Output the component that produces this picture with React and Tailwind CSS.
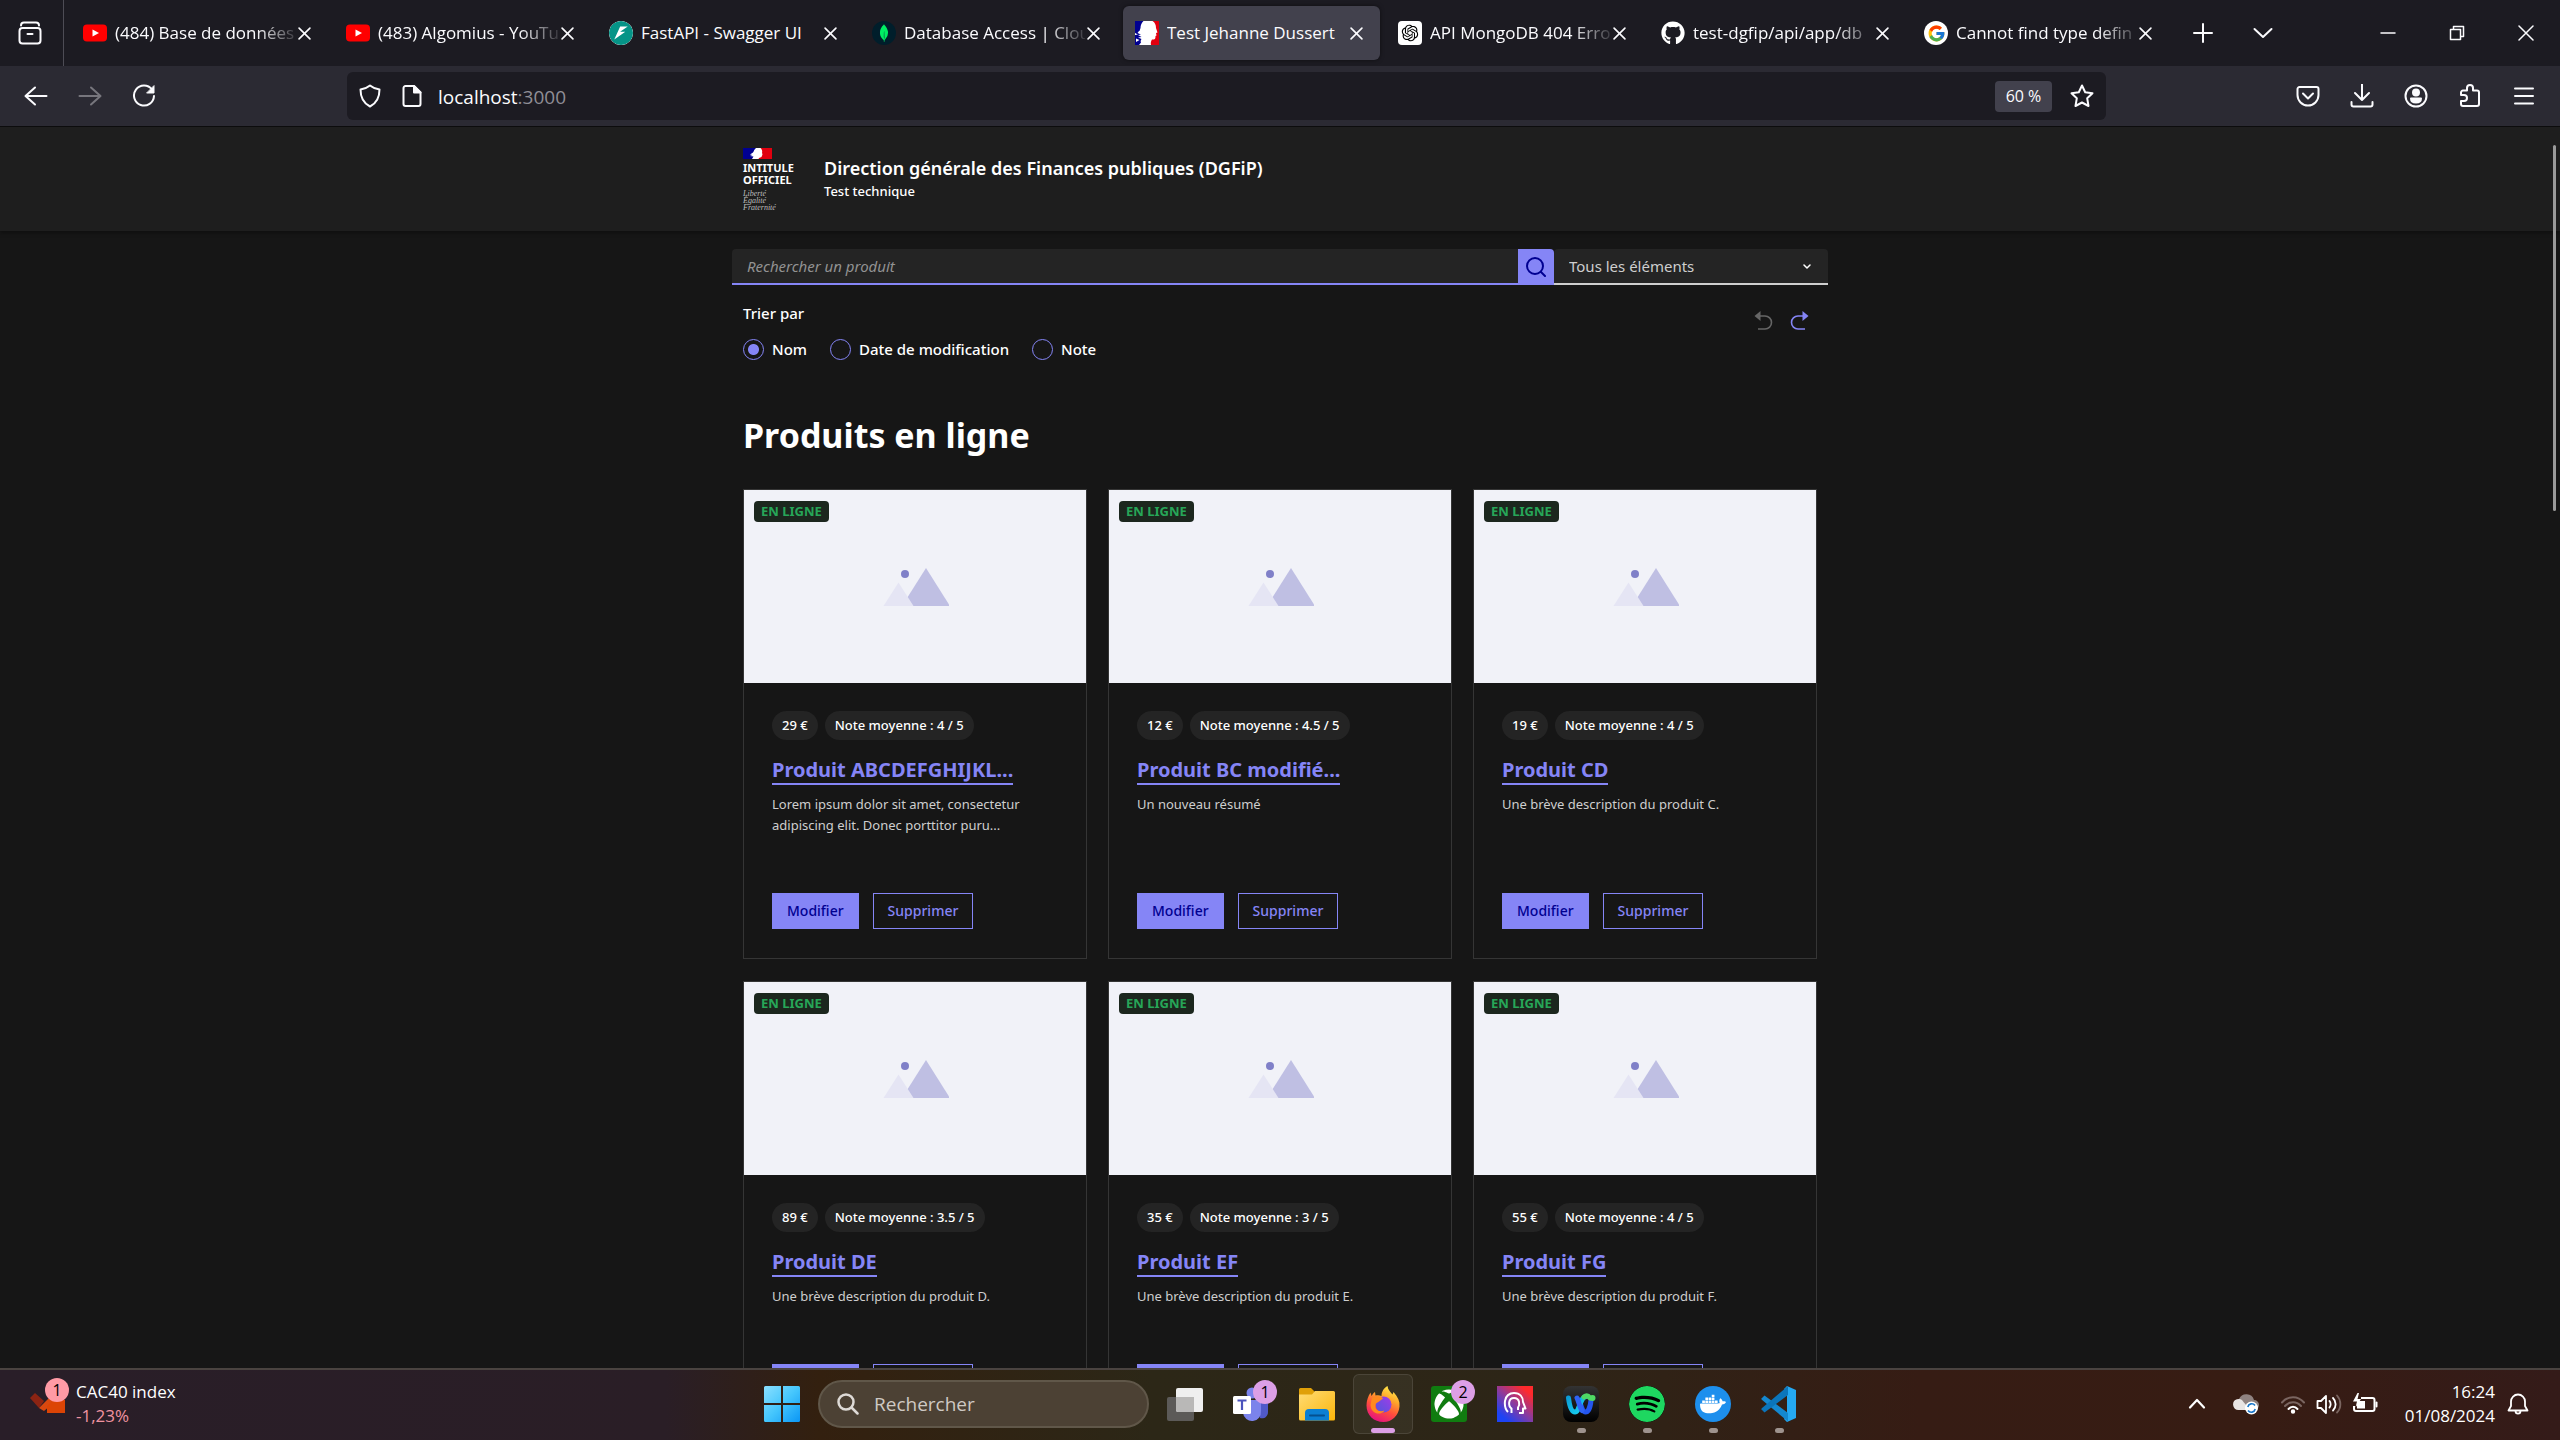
import { FaGithub, FaXbox } from "react-icons/fa";
import { FcGoogle } from "react-icons/fc";
import { RiOpenaiFill } from "react-icons/ri";
import { SiDocker, SiFastapi, SiMongodb, SiSpotify } from "react-icons/si";

/* ---------- shared drawings ---------- */

function Stroke({ children, className = "size-6", width = 2, box = "0 0 24 24" }) {
  return (
    <svg viewBox={box} className={className} fill="none" stroke="currentColor" strokeWidth={width} strokeLinecap="round" strokeLinejoin="round" aria-hidden="true">
      {children}
    </svg>
  );
}

const Cross = () => (
  <Stroke className="size-[13px]" box="0 0 12 12" width={1.5}>
    <path d="M1 1l10 10M11 1L1 11" />
  </Stroke>
);

function Marianne({ className }) {
  return (
    <svg viewBox="0 0 24 24" className={className} aria-hidden="true">
      <rect width="24" height="24" fill="#fff" />
      <path d="M0 0h8.500C6.500 2 5.500 4 5.500 7l-1 3H0z" fill="#000091" />
      <path d="M0 10h4l-1.500 2L6 13.500 3 14l3.500 2L3 16.500 6.500 18c-1 1.500-1 2.500-.5 3.500L4 24H0z" fill="#000091" />
      <path d="M0 12l3 1.500-3 .5zM1 17.500l3.500 1.500L1 21z" fill="#fff" />
      <path d="M24 0h-6.500c2.500 1.500 3.500 4 3.500 7l1.500 4.500-1.500.5.500 2.500-1 .5c0 3-.5 3.500-3.500 3.500-1 1.500-1.500 3-1 5.500h8z" fill="#e1000f" />
    </svg>
  );
}

function Flag() {
  return (
    <svg viewBox="0 0 58 22" className="h-[11px] w-[29px]" aria-hidden="true">
      <rect width="58" height="22" fill="#fff" />
      <path d="M0 0h26c-4 3-4 6-6 9l-6 4 5 1-5 2 7 1-3 5H0z" fill="#000091" />
      <path d="M58 0H35c3 3 4 6 3 10 2 3 0 5-1 8l-5 2-1 2h27z" fill="#e1000f" />
    </svg>
  );
}

/* ---------- browser tabs ---------- */

const YoutubeIcon = () => (
  <svg viewBox="0 0 24 24" className="size-6" aria-hidden="true">
    <rect y="3.500" width="24" height="17" rx="4" fill="#f00" />
    <path d="M9.500 8.500v7l6.500-3.500z" fill="#fff" />
  </svg>
);

const TABS = [
  { title: "(484) Base de données", icon: <YoutubeIcon />, fade: true },
  { title: "(483) Algomius - YouTube", icon: <YoutubeIcon />, fade: true },
  {
    title: "FastAPI - Swagger UI",
    icon: <SiFastapi className="size-6 rounded-full bg-white text-[#059487]" />,
  },
  {
    title: "Database Access | Cloud",
    icon: (
      <span className="flex size-6 items-center justify-center rounded-full bg-[#001e2b]">
        <SiMongodb className="size-[18px] text-[#00ed64]" />
      </span>
    ),
    fade: true,
  },
  { title: "Test Jehanne Dussert", icon: <Marianne className="size-6" />, active: true },
  {
    title: "API MongoDB 404 Error",
    icon: (
      <span className="flex size-6 items-center justify-center rounded-[4px] bg-white">
        <RiOpenaiFill className="size-5 text-black" />
      </span>
    ),
    fade: true,
  },
  { title: "test-dgfip/api/app/db", icon: <FaGithub className="size-6 text-white" />, fade: true },
  {
    title: "Cannot find type defin",
    icon: (
      <span className="flex size-6 items-center justify-center rounded-full bg-white">
        <FcGoogle className="size-[19px]" />
      </span>
    ),
    fade: true,
  },
];

function Tab({ title, icon, active, fade }) {
  return (
    <div className={`flex h-[54px] w-[257px] items-center rounded-md pr-[17px] pl-3 ${active ? "bg-[#42414d] shadow-[0_0_4px_rgba(0,0,0,0.5)]" : ""}`}>
      <button type="button" className="flex min-w-0 flex-1 items-center gap-2 text-left">
        <span className="shrink-0">{icon}</span>
        <span
          className={`w-[181px] overflow-hidden whitespace-nowrap ${fade ? "[mask-image:linear-gradient(to_right,black_78%,transparent_103%)]" : ""}`}
        >
          {title}
        </span>
      </button>
      <button type="button" aria-label={`Fermer l’onglet ${title}`} className="shrink-0">
        <Cross />
      </button>
    </div>
  );
}

function TabBar() {
  return (
    <div className="flex h-[66px] shrink-0 items-center bg-[#1c1b22] text-[17px] leading-6 text-[#fbfbfe]">
      <button type="button" aria-label="Firefox View" className="flex h-full w-16 items-center justify-center border-r border-[#4d4c55] pr-1">
        <Stroke className="size-6" width={2}>
          <path d="M3 4.500C3 2 4.500 1.500 6 1.500h12c1.500 0 3 .5 3 3" />
          <rect x="1.500" y="7" width="21" height="15.500" rx="3" />
          <path d="M9.500 13h5" />
        </Stroke>
      </button>
      <div className="ml-[7px] flex gap-[6px]">
        {TABS.map((t) => (
          <Tab key={t.title} {...t} />
        ))}
      </div>
      <button type="button" aria-label="Nouvel onglet" className="ml-6">
        <Stroke className="size-5" width={2} box="0 0 20 20"><path d="M10 1v18M1 10h18" /></Stroke>
      </button>
      <button type="button" aria-label="Lister tous les onglets" className="ml-10">
        <Stroke className="size-5" width={2} box="0 0 20 20"><path d="M1.500 6l8.500 8 8.500-8" /></Stroke>
      </button>
      <div className="ml-auto flex items-center gap-[53px] pr-[26px]">
        <button type="button" aria-label="Réduire">
          <Stroke className="size-4" width={1.5} box="0 0 16 16"><path d="M1 8h14" /></Stroke>
        </button>
        <button type="button" aria-label="Restaurer">
          <Stroke className="size-4" width={1.5} box="0 0 16 16">
            <rect x="1.500" y="4.500" width="10" height="10" />
            <path d="M4.500 4V1.500h10v10H12" />
          </Stroke>
        </button>
        <button type="button" aria-label="Fermer">
          <Stroke className="size-4" width={1.5} box="0 0 16 16"><path d="M1 1l14 14M15 1L1 15" /></Stroke>
        </button>
      </div>
    </div>
  );
}

/* ---------- address bar ---------- */

function NavBar() {
  return (
    <div className="flex h-[60px] shrink-0 items-center bg-[#2b2a33] text-[#fbfbfe]">
      <div className="flex w-[347px] shrink-0 items-center gap-[30px] pl-6">
        <button type="button" aria-label="Précédent">
          <Stroke><path d="M22.500 12H2M11 3.500L1.500 12l9.500 8.500" /></Stroke>
        </button>
        <button type="button" aria-label="Suivant" className="text-[#77767d]">
          <Stroke><path d="M1.500 12H22M13 3.500l9.500 8.500-9.500 8.500" /></Stroke>
        </button>
        <button type="button" aria-label="Actualiser">
          <Stroke>
            <path d="M20 5.500A10 10 0 1 0 22 12" />
            <path d="M22 2v7h-7z" fill="currentColor" strokeWidth="1" />
          </Stroke>
        </button>
      </div>
      <div className="flex h-12 min-w-0 flex-1 items-center rounded-md bg-[#1c1b22] pr-3 pl-[11px]">
        <Stroke><path d="M12 1.500c3 2.500 6 3.500 9.500 4 0 7-2.500 13.500-9.500 17-7-3.500-9.500-10-9.500-17 3.500-.5 6.500-1.500 9.500-4z" /></Stroke>
        <svg viewBox="0 0 24 24" className="ml-[18px] size-6" fill="none" stroke="currentColor" strokeWidth="2" strokeLinejoin="round" aria-hidden="true">
          <path d="M5.500 2H14l6.500 6.500V20a2 2 0 0 1-2 2h-13a2 2 0 0 1-2-2V4a2 2 0 0 1 2-2z" />
          <path d="M14 2v6.500h6.500z" fill="currentColor" />
        </svg>
        <button type="button" aria-label="Adresse de la page" className="ml-[14px] flex-1 pt-0.5 text-left text-[19px] leading-7">
          localhost<span className="text-[#8f8e96]">:3000</span>
        </button>
        <button type="button" className="h-[31px] w-[57px] rounded-[4px] bg-[#42414d] text-base leading-6">60 %</button>
        <button type="button" aria-label="Marquer cette page" className="ml-[18px]">
          <Stroke><path d="M12 1.500l3.200 6.700 7.300 1-5.300 5.100 1.300 7.700L12 18.500 5.500 22l1.300-7.700L1.500 9.200l7.300-1z" /></Stroke>
        </button>
      </div>
      <div className="flex shrink-0 items-center gap-[30px] pr-6 pl-[190px]">
        <button type="button" aria-label="Pocket">
          <Stroke>
            <path d="M3.500 3h17a2 2 0 0 1 2 2v6a10.500 10.500 0 0 1-21 0V5a2 2 0 0 1 2-2z" />
            <path d="M7 9.500l5 5 5-5" />
          </Stroke>
        </button>
        <button type="button" aria-label="Téléchargements">
          <Stroke><path d="M12 0v15.500M5 9l7 7 7-7M1.500 18v2.500a2 2 0 0 0 2 2h17a2 2 0 0 0 2-2V18" /></Stroke>
        </button>
        <button type="button" aria-label="Compte">
          <Stroke>
            <circle cx="12" cy="12" r="10.500" />
            <circle cx="12" cy="8.500" r="3" fill="currentColor" />
            <path d="M7 14.500h10c0 3-2.500 4-5 4s-5-1-5-4z" fill="currentColor" />
          </Stroke>
        </button>
        <button type="button" aria-label="Extensions">
          <Stroke><path d="M3 11V8.500a2 2 0 0 1 2-2h4V4a3 3 0 0 1 6 0v2.500h4a2 2 0 0 1 2 2V20a2 2 0 0 1-2 2H5a2 2 0 0 1-2-2v-3h3a3 3 0 0 0 0-6z" /></Stroke>
        </button>
        <button type="button" aria-label="Menu">
          <Stroke><path d="M3 4.500h18M3 12h18M3 19.500h18" /></Stroke>
        </button>
      </div>
    </div>
  );
}

/* ---------- page ---------- */

const PRODUCTS = [
  { name: "Produit ABCDEFGHIJKL...", price: "29 €", note: "4 / 5", text: "Lorem ipsum dolor sit amet, consectetur adipiscing elit. Donec porttitor puru..." },
  { name: "Produit BC modifié...", price: "12 €", note: "4.5 / 5", text: "Un nouveau résumé" },
  { name: "Produit CD", price: "19 €", note: "4 / 5", text: "Une brève description du produit C." },
  { name: "Produit DE", price: "89 €", note: "3.5 / 5", text: "Une brève description du produit D." },
  { name: "Produit EF", price: "35 €", note: "3 / 5", text: "Une brève description du produit E." },
  { name: "Produit FG", price: "55 €", note: "4 / 5", text: "Une brève description du produit F." },
];

function ProductCard({ name, price, note, text }) {
  return (
    <li className="relative flex flex-col border border-[#353535]">
      <div className="flex h-[193px] items-center justify-center bg-[#f1f2f8]">
        <svg viewBox="0 0 68 40" className="h-10 w-[68px]" aria-hidden="true">
          <path d="M45 1l24 38H21z" fill="#bfbfe3" />
          <path d="M17.500 15.500L32.500 39h-30z" fill="#e5e5f4" />
          <circle cx="24" cy="7" r="4" fill="#8080c8" />
        </svg>
      </div>
      <p className="absolute top-[11px] left-[10px] rounded-[4px] bg-[#1c271e] px-[7px] text-[13px] leading-[21px] font-bold text-[#27a658]">EN LIGNE</p>
      <div className="flex flex-1 flex-col items-start px-7 pt-7 pb-[29px]">
        <ul className="flex gap-[7px] text-[13px] leading-[29px] font-medium text-white">
          <li className="rounded-full bg-[#242424] px-[10px]">{price}</li>
          <li className="rounded-full bg-[#242424] px-[10px]">Note moyenne : {note}</li>
        </ul>
        <h2 className="mt-[17px] text-xl leading-7 font-bold text-[#8585f6]">
          <a href="#produit" className="block border-b-2 border-[#8585f6] leading-[26px]">{name}</a>
        </h2>
        <p className="mt-[9px] text-[13px] leading-[21px] text-[#cecece]">{text}</p>
        <div className="mt-auto flex gap-[14px] pt-[57px] text-[14px] leading-[34px] font-medium">
          <button type="button" className="border border-[#8585f6] bg-[#8585f6] px-[14px] text-[#000091]">Modifier</button>
          <button type="button" className="border border-[#8585f6] px-[14px] text-[#8585f6]">Supprimer</button>
        </div>
      </div>
    </li>
  );
}

function Radio({ label, checked }) {
  return (
    <label className="flex items-center gap-2">
      <input
        type="radio"
        name="tri"
        defaultChecked={checked}
        className="size-[21px] appearance-none rounded-full border border-[#8585f6] checked:bg-[radial-gradient(circle,#8585f6_5px,transparent_6px)]"
      />
      {label}
    </label>
  );
}

const redoShape = (
  <>
    <path d="M13 5H8a6.500 6.500 0 0 0 0 13h7" fill="none" stroke="currentColor" strokeWidth="1.600" />
    <path d="M12.500 0l6 5-6 5z" fill="currentColor" />
  </>
);

function Page() {
  return (
    <div className="relative min-h-0 flex-1 overflow-hidden border-t border-[#0c0c0d] bg-[#161616] font-['Noto_Sans',sans-serif] text-white">
      <header className="bg-[#1e1e1e] shadow-[0_2px_4px_rgba(0,0,0,0.35)]">
        <div className="mx-auto flex h-[104px] max-w-[1096px] items-start gap-[27px] px-[11px] pt-[21px]">
          <div className="w-[54px]">
            <Flag />
            <p className="mt-[3px] text-[11px] leading-[12px] font-bold">
              INTITULE
              <br />
              OFFICIEL
            </p>
            <p className="mt-1 font-['Liberation_Serif',serif] text-[8px] leading-[7px] text-[#bdbdbd] italic">
              Liberté
              <br />
              Égalité
              <br />
              Fraternité
            </p>
          </div>
          <div className="pt-2">
            <p className="text-lg leading-[24px] font-semibold">Direction générale des Finances publiques (DGFiP)</p>
            <p className="text-[13px] leading-[22px] font-medium">Test technique</p>
          </div>
        </div>
      </header>
      <main className="mx-auto max-w-[1096px] pt-[18px]">
        <div className="flex h-9">
          <form className="flex min-w-0 flex-1" onSubmit={(e) => e.preventDefault()}>
            <input
              type="search"
              aria-label="Rechercher un produit"
              placeholder="Rechercher un produit"
              className="min-w-0 flex-1 rounded-tl-[4px] border-b-2 border-[#8585f6] bg-[#242424] px-[15px] text-[15px] placeholder:text-[#929292] placeholder:italic"
            />
            <button type="submit" aria-label="Rechercher" className="flex w-9 items-center justify-center rounded-tr-[4px] bg-[#8585f6] text-[#000091]">
              <Stroke className="size-5" box="0 0 20 20" width={2}>
                <circle cx="9" cy="9" r="8" />
                <path d="M15 15l4 4" />
              </Stroke>
            </button>
          </form>
          <div className="relative w-[274px]">
            <select aria-label="Filtrer les éléments" className="h-full w-full appearance-none rounded-t-[4px] border-b-2 border-[#cecece] bg-[#242424] px-[15px] text-[15px] text-[#cecece]">
              <option>Tous les éléments</option>
            </select>
            <Stroke className="pointer-events-none absolute top-[14px] right-[17px] size-2" box="0 0 8 8" width={1.5}>
              <path d="M1 2l3 3 3-3" />
            </Stroke>
          </div>
        </div>
        <div className="px-[11px]">
          <div className="flex items-start justify-between pt-4">
            <fieldset className="text-[15px] leading-6 font-medium">
              <legend>Trier par</legend>
              <div className="mt-3 flex gap-[23px]">
                <Radio label="Nom" checked />
                <Radio label="Date de modification" />
                <Radio label="Note" />
              </div>
            </fieldset>
            <div className="flex gap-[17px] pt-[10px] pr-2">
              <button type="button" aria-label="Annuler" disabled className="text-[#666]">
                <svg viewBox="0 0 19 20" className="h-5 w-[19px] -scale-x-100" aria-hidden="true">{redoShape}</svg>
              </button>
              <button type="button" aria-label="Rétablir" className="text-[#8585f6]">
                <svg viewBox="0 0 19 20" className="h-5 w-[19px]" aria-hidden="true">{redoShape}</svg>
              </button>
            </div>
          </div>
          <h1 className="mt-[50px] text-[34px] leading-[48px] font-bold">Produits en ligne</h1>
          <ul className="mt-[30px] grid grid-cols-3 gap-x-[21px] gap-y-[22px]">
            {PRODUCTS.map((p) => (
              <ProductCard key={p.name} {...p} />
            ))}
          </ul>
        </div>
      </main>
      <div className="absolute top-[18px] right-[4px] h-[366px] w-[3px] rounded-full bg-[#9a9a9a]" />
    </div>
  );
}

/* ---------- taskbar ---------- */

function Badge({ children, className }) {
  return <span className={`absolute flex size-6 items-center justify-center rounded-full text-base leading-6 text-black ${className}`}>{children}</span>;
}

function TaskButton({ label, children, badge, dot, active }) {
  return (
    <button
      type="button"
      aria-label={label}
      className={`relative flex h-[60px] w-[60px] items-center justify-center rounded-md border ${active ? "border-white/10 bg-white/5" : "border-transparent"}`}
    >
      {children}
      {badge && <Badge className="top-[5px] right-[3px] bg-[#dc9fe6]">{badge}</Badge>}
      {dot && <span className="absolute bottom-0 h-[5px] w-[9px] rounded-full bg-[#9e938e]" />}
      {active && <span className="absolute bottom-0 h-[5px] w-6 rounded-full bg-[#dc9fe6]" />}
    </button>
  );
}

const TaskViewIcon = () => (
  <svg viewBox="0 0 36 36" className="size-9" aria-hidden="true">
    <rect x="0" y="11" width="27" height="24" rx="2" fill="#5c5a58" />
    <rect x="9" y="2" width="27" height="24" rx="2" fill="#efefef" />
    <path d="M9 11h18v15H11a2 2 0 0 1-2-2z" fill="#b9b8b7" />
  </svg>
);

const TeamsIcon = () => (
  <svg viewBox="0 0 36 36" className="size-9" aria-hidden="true">
    <circle cx="19" cy="7" r="5.500" fill="#7b83eb" />
    <path d="M25 14h10v12a6 6 0 0 1-8 6z" fill="#5059c9" />
    <path d="M11 14h17v11a9 9 0 0 1-18 2z" fill="#7b83eb" />
    <rect x="0" y="10" width="18" height="18" rx="1.500" fill="#fff" />
    <path d="M4.500 14.500h9M9 14.500V24" stroke="#4b53bc" strokeWidth="2.200" />
  </svg>
);

const FolderIcon = () => (
  <svg viewBox="0 0 36 36" className="size-9" aria-hidden="true">
    <defs>
      <linearGradient id="folder" x1="0" y1="0" x2="1" y2="1">
        <stop offset="0" stopColor="#ffdc75" />
        <stop offset="1" stopColor="#fbb50a" />
      </linearGradient>
    </defs>
    <path d="M0 3.500A1.500 1.500 0 0 1 1.500 2H12l4 4v5H0z" fill="#e0a008" />
    <path d="M0 8.500h13L16 5h18.500A1.500 1.500 0 0 1 36 6.500V33a1.500 1.500 0 0 1-1.500 1.500h-33A1.500 1.500 0 0 1 0 33z" fill="url(#folder)" />
    <path d="M6 34.500V27a4 4 0 0 1 4-4h16a4 4 0 0 1 4 4v7.500z" fill="#0b7fd3" />
    <path d="M11 29.500h14" stroke="#05508f" strokeWidth="2" strokeLinecap="round" />
  </svg>
);

const FirefoxIcon = () => (
  <svg viewBox="0 0 36 36" className="size-9" aria-hidden="true">
    <defs>
      <linearGradient id="fox" x1="0.8" y1="0" x2="0.35" y2="1">
        <stop offset="0" stopColor="#fff44f" />
        <stop offset="0.35" stopColor="#ffa52a" />
        <stop offset="0.65" stopColor="#ff4f3c" />
        <stop offset="1" stopColor="#e5127f" />
      </linearGradient>
      <linearGradient id="globe" x1="1" y1="0" x2="0" y2="1">
        <stop offset="0" stopColor="#a23be8" />
        <stop offset="1" stopColor="#5057dc" />
      </linearGradient>
    </defs>
    <path d="M22.500 0c.5 4 3 6 5 8.500l1-2.500c4.500 5 6.500 9.500 6 14.500C33.500 30 27 36 18.500 36 9 36 1.500 29.500 1.500 19.500c0-5 1.500-9 4-13l1 3.500c1-1.500 2-3 3.500-4l.5 3.500c2-.5 4-.5 6 .5 0-4.500 2.500-8 6-10z" fill="url(#fox)" />
    <circle cx="18.500" cy="18.500" r="8" fill="url(#globe)" />
    <path d="M7 12c4-2.500 9-2.500 11 .5l-4 3c-1.500 1.500-3 1-3.500 3.500-1 5 4 7.500 9 5.500-4 6-14 3-14-6z" fill="#ff8a1f" />
  </svg>
);

const XboxIcon = () => (
  <span className="flex size-9 items-center justify-center rounded-[3px] bg-[#107c10]">
    <FaXbox className="size-[30px] text-white" />
  </span>
);

const HeadIcon = () => (
  <span className="flex size-9 items-center justify-center bg-linear-[40deg] from-[#1d43f5] from-15% via-[#8d3a9c] to-[#ff2a2c] to-85%">
    <svg viewBox="0 0 28 28" className="size-7" fill="none" stroke="#fff" strokeWidth="2" strokeLinejoin="round" aria-hidden="true">
      <path d="M7 22c-3-3-3.500-7-3-11C4.500 6 8.500 3 13 3c6 0 9 4 9 9l2.500 6.500H22V23h-4" />
      <path d="M10.500 23v-4.500C7 16 7 8 13 8s6 7 4 9.500V20" />
    </svg>
  </span>
);

const WebexIcon = () => (
  <svg viewBox="0 0 36 36" className="size-9" fill="none" strokeLinecap="round" aria-hidden="true">
    <defs>
      <linearGradient id="webexTile" x1="0" y1="0" x2="0" y2="1">
        <stop offset="0" stopColor="#333" />
        <stop offset="1" stopColor="#000" />
      </linearGradient>
      <linearGradient id="webexLeft" x1="0" y1="0" x2="1" y2="1">
        <stop offset="0" stopColor="#0a9bd6" />
        <stop offset="1" stopColor="#19d7f5" />
      </linearGradient>
    </defs>
    <rect width="36" height="36" rx="8" fill="url(#webexTile)" />
    <path d="M28 14c-.5 6-2.500 12-5.500 12S18 19 16 14" stroke="#2456f0" strokeWidth="5" />
    <path d="M5.500 12c1 8 3 14 6.500 14 4.500 0 5-15 11-15.500" stroke="url(#webexLeft)" strokeWidth="5" />
    <path d="M14 12c2 4 3 10 5 12.500" stroke="#2f63f5" strokeWidth="5" />
    <path d="M21 11c2-1.500 4-1.500 6 1" stroke="#4fd964" strokeWidth="5" />
    <circle cx="29.500" cy="12" r="3" fill="#4fd964" />
  </svg>
);

const DockerIcon = () => (
  <span className="flex size-9 items-center justify-center rounded-full bg-[#1d8fed]">
    <SiDocker className="size-[26px] text-white" />
  </span>
);

const CodeIcon = () => (
  <svg viewBox="0 0 36 36" className="size-9" aria-hidden="true">
    <path d="M26 0l9 4v28l-9 4-3-3 3-6V9l-3-6z" fill="#25a9f2" />
    <path d="M.5 12.500l3-3L27 27v8.500L.5 13.500z" fill="#1488d0" />
    <path d="M.5 23.500l3 3L27 9V0L.5 22.500z" fill="#0b75bb" />
  </svg>
);

const APPS = [
  { label: "Vue des tâches", icon: <TaskViewIcon /> },
  { label: "Teams", icon: <TeamsIcon />, badge: "1" },
  { label: "Explorateur de fichiers", icon: <FolderIcon /> },
  { label: "Firefox", icon: <FirefoxIcon />, active: true },
  { label: "Xbox", icon: <XboxIcon />, badge: "2" },
  { label: "Assistant", icon: <HeadIcon /> },
  { label: "Webex", icon: <WebexIcon />, dot: true },
  { label: "Spotify", icon: <SiSpotify className="size-9 rounded-full bg-black text-[#1ed760]" />, dot: true },
  { label: "Docker", icon: <DockerIcon />, dot: true },
  { label: "Visual Studio Code", icon: <CodeIcon />, dot: true },
];

function Taskbar() {
  return (
    <div className="flex h-[72px] shrink-0 items-center border-t-2 border-[#4a4340] bg-[linear-gradient(to_right,#291e28_0%,#2a1e26_26%,#33200f_32%,#2c2717_45%,#2d2517_60%,#361c14_75%,#371c13_88%,#341b19_100%)] pb-0.5 text-white">
      <div className="flex flex-1 items-center">
        <button type="button" className="flex items-center gap-[11px] pl-[29px] text-left text-[17px] leading-6">
          <span className="relative">
            <svg viewBox="0 0 36 36" className="size-9" aria-hidden="true">
              <path d="M1 12l5-5 9 8-5 7z" fill="#8c2413" />
              <path d="M10 22l12-12 5 5-12 10z" fill="#d9480f" />
              <path d="M18 27v-7l10-10 8 4v13z" fill="#dc4405" />
            </svg>
            <Badge className="-top-2 right-[-4px] bg-[#ff9aa5]">1</Badge>
          </span>
          <span>
            CAC40 index
            <br />
            <span className="text-[#f093a0]">-1,23%</span>
          </span>
        </button>
      </div>
      <div className="flex items-center gap-[6px] pl-8">
        <button type="button" aria-label="Démarrer" className="flex h-[60px] w-[60px] items-center justify-center">
          <svg viewBox="0 0 36 36" className="size-9" aria-hidden="true">
            <defs>
              <linearGradient id="win" x1="0" y1="0" x2="1" y2="1">
                <stop offset="0" stopColor="#8be0ff" />
                <stop offset="0.5" stopColor="#45c6fd" />
                <stop offset="1" stopColor="#0a96f5" />
              </linearGradient>
            </defs>
            <path d="M1.500 0H17v17H0V1.500A1.500 1.500 0 0 1 1.500 0zM19 0h15.500A1.500 1.500 0 0 1 36 1.500V17H19zM0 19h17v17H1.500A1.500 1.500 0 0 1 0 34.500zM19 19h17v15.500a1.500 1.500 0 0 1-1.500 1.500H19z" fill="url(#win)" />
          </svg>
        </button>
        <label className="flex h-12 w-[331px] items-center gap-[15px] rounded-full border-2 border-[#605749] bg-[#4c4134] pl-[17px]">
          <Stroke className="size-[22px] shrink-0 text-[#dedad6]" box="0 0 22 22" width={2.5}>
            <circle cx="9" cy="9" r="7.500" />
            <path d="M14.500 14.500l6 6" />
          </Stroke>
          <input type="search" aria-label="Rechercher" placeholder="Rechercher" className="w-full min-w-0 bg-transparent text-[19px] outline-none placeholder:text-[#cfc9c3]" />
        </label>
        {APPS.map(({ icon, ...a }) => (
          <TaskButton key={a.label} {...a}>
            {icon}
          </TaskButton>
        ))}
      </div>
      <div className="flex flex-1 items-center justify-end pr-[31px]">
        <button type="button" aria-label="Icônes masquées">
          <Stroke className="size-[18px]" box="0 0 18 18" width={2.2}><path d="M2 12.500L9 5l7 7.500" /></Stroke>
        </button>
        <svg viewBox="0 0 26 22" className="ml-[27px] h-[22px] w-[26px]" aria-hidden="true">
          <path d="M6 17a6 6 0 0 1 0-11 8 8 0 0 1 15 1 5 5 0 0 1 0 10z" fill="#8f8280" />
          <path d="M5.500 17a5.500 5.500 0 1 1 5-8l7 8z" fill="#e8e4e3" />
          <circle cx="18.500" cy="15" r="6.500" fill="#fff" />
          <path d="M14.800 14a4 4 0 0 1 7.200-1.500M22.200 16a4 4 0 0 1-7.200 1.500" fill="none" stroke="#1976c9" strokeWidth="1.600" />
        </svg>
        <svg viewBox="0 0 26 20" className="ml-[21px] h-5 w-[26px]" fill="none" stroke="#fff" strokeWidth="2" strokeLinecap="round" aria-hidden="true">
          <path d="M2 8.500c6-7 16-7 22 0M5 12c4.500-5 11.500-5 16 0" stroke="#7a6560" />
          <path d="M8.500 15c2.500-3 6.500-3 9 0" />
          <circle cx="13" cy="17.500" r="1.200" fill="#fff" />
        </svg>
        <svg viewBox="0 0 26 22" className="ml-[10px] h-[22px] w-[26px]" fill="none" stroke="#fff" strokeWidth="1.800" strokeLinecap="round" strokeLinejoin="round" aria-hidden="true">
          <path d="M1.500 8h3.500l5-5v17l-5-5H1.500z" />
          <path d="M13.500 8c1.500 1.500 1.500 5 0 6.500M17 5c3.500 3.500 3.500 9 0 12.500" />
          <path d="M21 2.500c4.500 5 4.500 12.500 0 17" stroke="#7a6560" />
        </svg>
        <svg viewBox="0 0 26 22" className="ml-[10px] h-[22px] w-[26px]" fill="none" stroke="#fff" strokeWidth="2" strokeLinejoin="round" aria-hidden="true">
          <path d="M9 5h11.500a2 2 0 0 1 2 2v9a2 2 0 0 1-2 2H4a2 2 0 0 1-2-2v-3" />
          <path d="M24.500 9.500v4" strokeLinecap="round" />
          <path d="M5 8h8v7.500H5z" fill="#fff" stroke="none" />
          <path d="M5.500 0L1 8.500h4l-1.500 6L9 6H5.500L7 0z" fill="#fff" stroke="none" />
        </svg>
        <button type="button" className="ml-[27px] text-right text-[17px] leading-6">
          16:24
          <br />
          01/08/2024
        </button>
        <button type="button" aria-label="Notifications" className="ml-[12px]">
          <Stroke className="size-[22px]" box="0 0 22 22" width={1.8}>
            <path d="M11 1.500a7 7 0 0 0-7 7V13l-2.500 4.500h19L18 13V8.500a7 7 0 0 0-7-7zM8.500 18c0 3.500 5 3.500 5 0" />
          </Stroke>
        </button>
      </div>
    </div>
  );
}

export default function App() {
  return (
    <div className="flex h-screen flex-col overflow-hidden bg-[#161616] font-['Open_Sans',sans-serif]">
      <TabBar />
      <NavBar />
      <Page />
      <Taskbar />
    </div>
  );
}
